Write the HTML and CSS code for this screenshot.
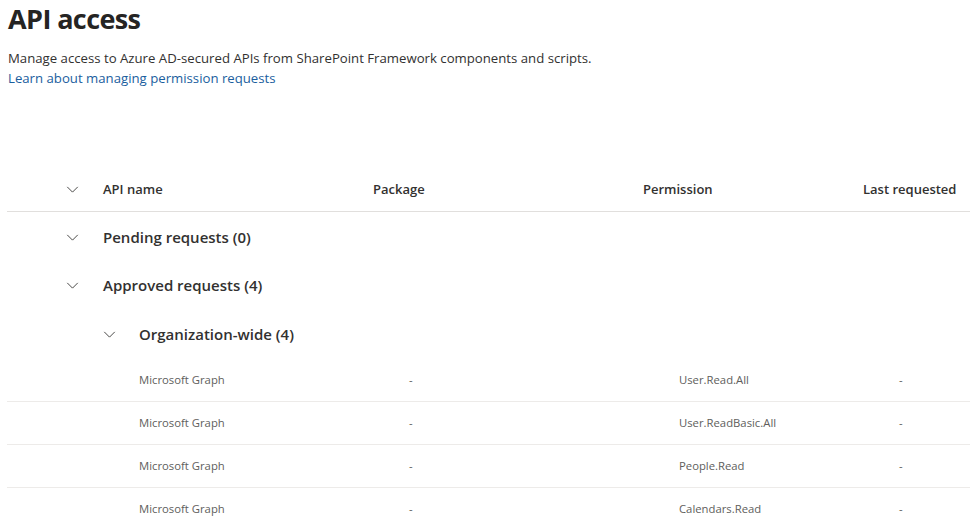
FILE: index.html
```html
<!DOCTYPE html>
<html lang="en">
<head>
<meta charset="utf-8">
<title>API access</title>
<link rel="stylesheet" href="styles.css">
</head>
<body>
<div class="page">
  <h1 class="title">API access</h1>
  <p class="desc">Manage access to Azure AD-secured APIs from SharePoint Framework components and scripts.</p>
  <a class="link" href="#">Learn about managing permission requests</a>

  <div class="list">
    <div class="header">
      <span class="chev-cell"><svg class="chev" viewBox="0 0 14 8"><path d="M1 1 L7 7 L13 1"/></svg></span>
      <span class="col c-name">API name</span>
      <span class="col c-pkg">Package</span>
      <span class="col c-perm">Permission</span>
      <span class="col c-last">Last requested</span>
    </div>

    <div class="group first">
      <span class="chev-cell"><svg class="chev" viewBox="0 0 14 8"><path d="M1 1 L7 7 L13 1"/></svg></span>
      <span class="group-title">Pending requests (0)</span>
    </div>
    <div class="group">
      <span class="chev-cell"><svg class="chev" viewBox="0 0 14 8"><path d="M1 1 L7 7 L13 1"/></svg></span>
      <span class="group-title">Approved requests (4)</span>
    </div>
    <div class="group sub">
      <span class="chev-cell"><svg class="chev" viewBox="0 0 14 8"><path d="M1 1 L7 7 L13 1"/></svg></span>
      <span class="group-title">Organization-wide (4)</span>
    </div>

    <div class="row">
      <span class="col c-name">Microsoft Graph</span>
      <span class="col c-pkg">-</span>
      <span class="col c-perm">User.Read.All</span>
      <span class="col c-last">-</span>
    </div>
    <div class="row">
      <span class="col c-name">Microsoft Graph</span>
      <span class="col c-pkg">-</span>
      <span class="col c-perm">User.ReadBasic.All</span>
      <span class="col c-last">-</span>
    </div>
    <div class="row">
      <span class="col c-name">Microsoft Graph</span>
      <span class="col c-pkg">-</span>
      <span class="col c-perm">People.Read</span>
      <span class="col c-last">-</span>
    </div>
    <div class="row">
      <span class="col c-name">Microsoft Graph</span>
      <span class="col c-pkg">-</span>
      <span class="col c-perm">Calendars.Read</span>
      <span class="col c-last">-</span>
    </div>
  </div>
</div>
</body>
</html>
```
FILE: styles.css
```css
* { box-sizing: border-box; }
html, body { margin: 0; padding: 0; background: #fff; }
body {
  font-family: "Segoe UI", "Open Sans", "Noto Sans", "Liberation Sans", sans-serif;
  color: #323130;
  overflow: hidden;
}
.page { padding: 0 0 0 7px; }
.title {
  margin: 0;
  padding-left: 1px;
  font-size: 27px;
  line-height: 38px;
  font-weight: 700;
  color: #252423;
  letter-spacing: -0.6px;
}
.desc {
  margin: 10px 0 0 1px;
  font-size: 13.2px;
  line-height: 20px;
  color: #323130;
}
.link {
  display: block;
  margin-left: 1px;
  font-size: 13.2px;
  line-height: 20px;
  color: #1a5e9e;
  text-decoration: none;
}
.list { margin-top: 81px; }
.header {
  display: flex;
  align-items: center;
  height: 43px;
  padding-bottom: 2px;
  border-bottom: 1px solid #e1dfdd;
  font-size: 13px;
  font-weight: 600;
  color: #323130;
}
.chev-cell {
  display: flex;
  align-items: center;
  justify-content: flex-start;
  width: 96px;
  padding-left: 59px;
}
.chev { width: 13px; height: 7px; fill: none; stroke: #323130; stroke-width: 1; }
.col { display: block; flex: 0 0 auto; }
.c-name { width: 270px; }
.c-pkg { width: 270px; }
.c-perm { width: 220px; }
.c-last { flex: 1; }
.group {
  display: flex;
  align-items: center;
  height: 48px;
  padding-bottom: 4px;
}
.group.first { margin-top: 3px; }
.group-title {
  font-size: 15px;
  font-weight: 600;
  color: #323130;
}
.group.sub { padding-bottom: 2px; }
.group.sub .chev-cell { width: 132px; padding-left: 96px; }
.row {
  display: flex;
  align-items: center;
  height: 43px;
  padding-left: 132px;
  padding-bottom: 2px;
  border-bottom: 1px solid #edebe9;
  font-size: 11.3px;
  color: #605e5c;
}
.row:last-child { border-bottom: none; }
```
